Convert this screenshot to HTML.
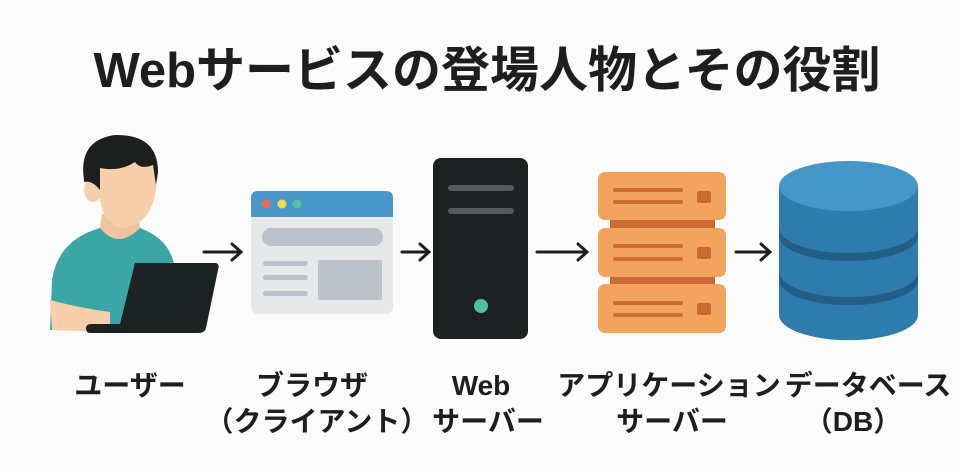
<!DOCTYPE html>
<html><head><meta charset="utf-8"><style>
html,body{margin:0;padding:0;background:#fbfbfb;}
svg{display:block}
text{font-family:"Liberation Sans","Noto Sans CJK JP",sans-serif;font-weight:bold;fill:#1d1f1f}
</style></head><body>
<svg width="961" height="471" viewBox="0 0 961 471" xmlns="http://www.w3.org/2000/svg">
<rect width="961" height="471" fill="#fbfbfb"/>
<text x="487" y="87" font-size="49" text-anchor="middle">Webサービスの登場人物とその役割</text>

<!-- person -->
<path d="M50 330 L52 280 Q58 240 100 228 L140 228 Q172 240 175 270 L175 330 Z" fill="#3aa6a5"/>
<path d="M100 228 Q118 250 140 228 L138 214 L102 214 Z" fill="#f0c3a0"/>
<ellipse cx="93" cy="190" rx="9" ry="12" fill="#f7cfaa"/>
<path d="M98 170 Q96 222 122 228 Q150 226 156 190 L156 160 Q125 150 98 160 Z" fill="#f7cfaa"/>
<path d="M84 180 Q78 140 115 135 Q158 134 158 172 L156 185 L153 165 Q140 170 135 162 Q120 172 100 168 L100 190 Q92 180 84 182 Z" fill="#1d1f1f"/>
<path d="M50 300 L52 330 L110 332 L110 312 Q80 308 50 300 Z" fill="#f7cfaa"/>
<path d="M135 263 L216 263 Q220 264 218 270 L206 328 Q205 333 198 333 L90 333 Q86 333 86 328 Q86 324 92 324 L120 324 Z" fill="#1d2222"/>

<!-- arrows -->
<g stroke="#1d1f1f" stroke-width="3" fill="none" stroke-linecap="round">
<path d="M204 252 H240 M232 244 L241 252 L232 260"/>
<path d="M402 252 H428 M420 244 L429 252 L420 260"/>
<path d="M537 252 H586 M578 244 L587 252 L578 260"/>
<path d="M736 252 H769 M761 244 L770 252 L761 260"/>
</g>

<!-- browser -->
<rect x="251" y="191" width="142" height="123" rx="7" fill="#e7e8ea"/>
<path d="M251 217 V198 Q251 191 258 191 H386 Q393 191 393 198 V217 Z" fill="#4a97cc"/>
<circle cx="266" cy="204" r="4.5" fill="#ef6a5a"/><circle cx="282" cy="204" r="4.5" fill="#f3dc4a"/><circle cx="297" cy="204" r="4.5" fill="#55c39a"/>
<rect x="262" y="228" width="121" height="18" rx="9" fill="#bcc2c9"/>
<rect x="263" y="261" width="45" height="5" rx="2.5" fill="#bcc2c9"/>
<rect x="263" y="275" width="45" height="5" rx="2.5" fill="#bcc2c9"/>
<rect x="263" y="291" width="45" height="5" rx="2.5" fill="#bcc2c9"/>
<rect x="318" y="260" width="64" height="40" rx="2" fill="#bcc2c9"/>

<!-- web server -->
<rect x="433" y="158" width="95" height="181" rx="8" fill="#1d2121"/>
<rect x="448" y="185" width="66" height="6" rx="3" fill="#525b60"/>
<rect x="448" y="208" width="66" height="6" rx="3" fill="#525b60"/>
<circle cx="481" cy="306" r="7" fill="#4cc0a0"/>

<!-- app server -->
<rect x="610" y="215" width="105" height="80" fill="#cc6a33"/>
<g fill="#f2a45f">
<rect x="598" y="172" width="128" height="48" rx="7"/>
<rect x="598" y="228" width="128" height="49" rx="7"/>
<rect x="598" y="284" width="128" height="49" rx="7"/>
</g>
<g fill="#cc6a33">
<rect x="613" y="188" width="70" height="4" rx="2"/><rect x="613" y="200" width="70" height="4" rx="2"/><rect x="697" y="191" width="14" height="12" rx="2"/>
<rect x="613" y="244" width="70" height="4" rx="2"/><rect x="613" y="257" width="70" height="4" rx="2"/><rect x="697" y="247" width="14" height="12" rx="2"/>
<rect x="613" y="301" width="70" height="4" rx="2"/><rect x="613" y="313" width="70" height="4" rx="2"/><rect x="697" y="303" width="14" height="12" rx="2"/>
</g>

<!-- database -->
<path d="M779 186 V315 A69 25 0 0 0 918 315 V186 Z" fill="#2e7cad"/>
<path d="M779 228 A69 25 0 0 0 918 228 V236 A69 25 0 0 1 779 236 Z" fill="#235e86"/>
<path d="M779 272 A69 25 0 0 0 918 272 V280 A69 25 0 0 1 779 280 Z" fill="#235e86"/>
<ellipse cx="848.5" cy="186" rx="69.5" ry="25" fill="#4596c9"/>

<!-- labels -->
<g font-size="28" text-anchor="middle">
<text x="130" y="395">ユーザー</text>
<text x="312" y="395">ブラウザ</text>
<text x="317" y="431">（クライアント）</text>
<text x="481" y="395">Web</text>
<text x="488" y="431">サーバー</text>
<text x="669" y="395">アプリケーション</text>
<text x="672" y="431">サーバー</text>
<text x="868" y="395">データベース</text>
<text x="853" y="431">（DB）</text>
</g>
</svg>
</body></html>
